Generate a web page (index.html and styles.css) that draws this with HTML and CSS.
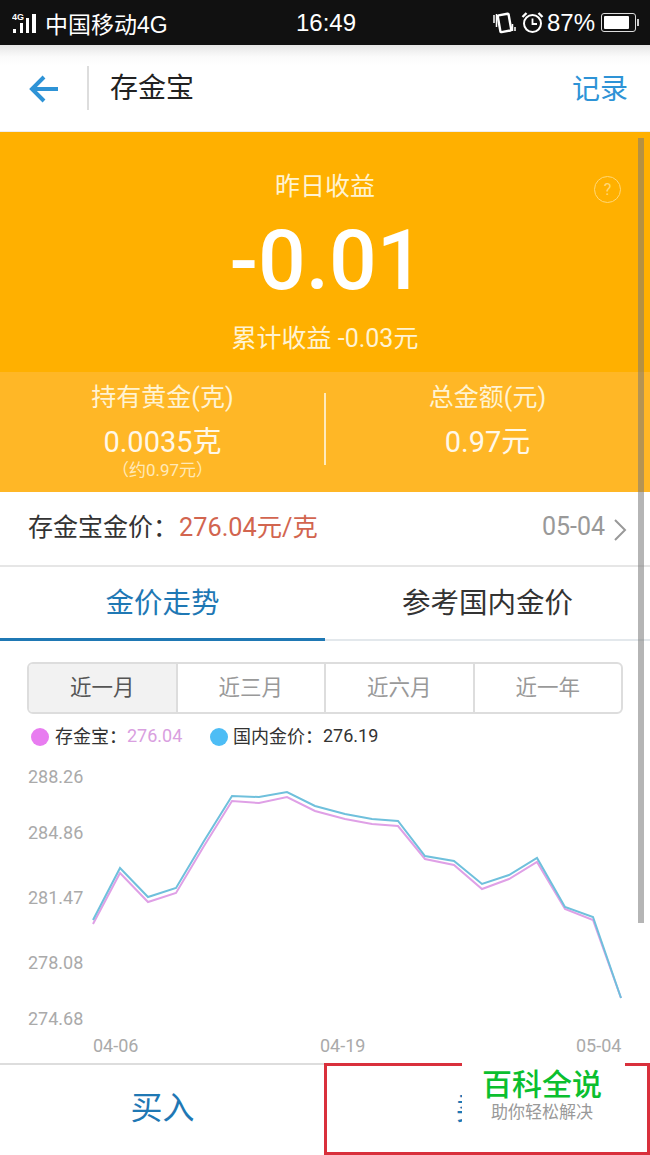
FILE: index.html
```html
<!DOCTYPE html>
<html lang="zh-CN">

<head>
    <meta charset="UTF-8">
    <title>存金宝</title>
    <link rel="stylesheet" href="styles.css">
</head>

<body>
    <div class="page">
        <!-- 状态栏 -->
        <div class="status">
            <svg class="sig" width="26" height="26" viewBox="0 0 26 26">
                <text x="0" y="10" class="sig-txt">4G</text>
                <rect x="1" y="19" width="3" height="4" />
                <rect x="8" y="13" width="3" height="10" />
                <rect x="14" y="8" width="3" height="15" />
                <rect x="20" y="4" width="4" height="19" />
            </svg>
            <span class="carrier">中国移动4G</span>
            <span class="time">16:49</span>
            <div class="status-right">
                <svg width="24" height="24" viewBox="0 0 24 24" fill="none" stroke="#fff">
                    <rect x="7" y="3.5" width="11" height="17" rx="1" stroke-width="2.4" transform="rotate(-10 12 12)" />
                    <path d="M2 4v8M4.5 3v13M20.500 13v7M23 16v4" stroke-width="1.5" />
                </svg>
                <svg class="clock" width="23" height="23" viewBox="0 0 23 23" fill="none" stroke="#fff">
                    <circle cx="11.500" cy="12.500" r="8.500" stroke-width="2" />
                    <path d="M11.500 7.500v5.500h4.500" stroke-width="1.800" />
                    <path d="M1.500 6l4-4M21.500 6l-4-4" stroke-width="2.400" />
                </svg>
                <span class="pct">87%</span>
                <div class="batt"><div class="batt-in"></div></div>
            </div>
        </div>

        <!-- 标题栏 -->
        <div class="header">
            <svg class="back" width="30" height="30" viewBox="0 0 30 30" fill="none" stroke="#2e93d6" stroke-width="4">
                <path d="M29 15H4M15 3L3 15l12 12" />
            </svg>
            <span class="title">存金宝</span>
            <span class="record">记录</span>
        </div>

        <!-- 收益 -->
        <div class="hero">
            <div class="hero-label">昨日收益</div>
            <div class="hero-num">-0.01</div>
            <div class="hero-sum">累计收益 -0.03元</div>
            <span class="help">?</span>
        </div>
        <div class="stats">
            <div class="stat stat-left">
                <div class="stat-label">持有黄金(克)</div>
                <div class="stat-num">0.0035克</div>
                <div class="stat-sub">（约0.97元）</div>
            </div>
            <div class="stat">
                <div class="stat-label">总金额(元)</div>
                <div class="stat-num">0.97元</div>
            </div>
        </div>

        <div class="price">
            <span class="price-name">存金宝金价：</span>
            <span class="price-val">276.04元/克</span>
            <span class="price-date">05-04</span>
            <svg class="price-more" width="14" height="24" viewBox="0 0 14 24" fill="none" stroke="#999" stroke-width="2">
                <path d="M2 2l10 10L2 22" />
            </svg>
        </div>

        <div class="tabs">
            <div class="tab on">金价走势</div>
            <div class="tab">参考国内金价</div>
        </div>

        <div class="range">
            <div class="range-item on">近一月</div>
            <div class="range-item">近三月</div>
            <div class="range-item">近六月</div>
            <div class="range-item">近一年</div>
        </div>

        <div class="legend">
            <i class="dot dot-pink"></i>
            <span class="legend-name">存金宝：</span>
            <span class="legend-pink">276.04</span>
            <i class="dot dot-blue"></i>
            <span class="legend-name">国内金价：</span>
            <span>276.19</span>
        </div>

        <!-- 走势图 -->
        <svg class="chart" width="650" height="303" viewBox="0 760 650 303">
            <g class="axis">
                <text x="28" y="783">288.26</text>
                <text x="28" y="839">284.86</text>
                <text x="28" y="904">281.47</text>
                <text x="28" y="969">278.08</text>
                <text x="28" y="1025">274.68</text>
                <text x="93" y="1052">04-06</text>
                <text x="320" y="1052">04-19</text>
                <text x="576" y="1052">05-04</text>
            </g>
            <polyline class="line-pink" points="93,924 120,873 148,902 176,893 204,846 232,801 259,803 287,797 315,811 345,819 372,824 398,826 425,859 454,865 482,889 509,879 537,862 565,909 593,920 621,998" />
            <polyline class="line-blue" points="93,920 120,868 148,897 176,888 204,841 232,796 259,797 287,792 315,806 345,814 372,819 398,821 425,856 454,861 482,884 509,875 537,858 565,907 593,917 621,998" />
        </svg>

        <div class="bottom">
            <div class="bottom-btn">买入</div>
            <div class="bottom-btn">卖出</div>
        </div>

        <div class="scrollbar"></div>
        <div class="redbox"></div>
        <div class="mark">
            <div class="mark-name">百科全说</div>
            <div class="mark-sub">助你轻松解决</div>
        </div>
    </div>
</body>

</html>
```

FILE: styles.css
```css
* {
    padding: 0;
    margin: 0;
    box-sizing: border-box;
}

body {
    background: #fff;
    font-family: "Roboto", "Noto Sans CJK SC", sans-serif;
}

.page {
    position: relative;
    width: 650px;
    height: 1155px;
    overflow: hidden;
}

/* 状态栏 */
.status {
    display: flex;
    align-items: center;
    height: 45px;
    padding-left: 12px;
    background: #111;
    color: #fff;
    font-family: "Liberation Sans", "Noto Sans CJK SC", sans-serif;
}

.sig {
    fill: #fff;
    margin-right: 7px;
}

.sig-txt {
    font-family: "Liberation Sans", sans-serif;
    font-size: 9px;
    font-weight: 700;
}

.carrier {
    width: 251px;
    font-size: 23px;
}

.time {
    width: 60px;
    font-size: 24px;
}

.status-right {
    display: flex;
    align-items: center;
    margin-left: 136px;
}

.clock {
    margin-left: 5px;
}

.pct {
    margin-left: 3px;
    font-size: 24px;
}

.batt {
    position: relative;
    width: 35px;
    height: 19px;
    margin-left: 6px;
    padding: 2px;
    border: 1px solid #ddd;
    border-radius: 3px;
}

.batt::after {
    content: "";
    position: absolute;
    right: -4px;
    top: 5px;
    width: 2px;
    height: 7px;
    background: #ccc;
}

.batt-in {
    width: 87%;
    height: 100%;
    background: #fff;
    border-radius: 1px;
}

/* 标题栏 */
.header {
    display: flex;
    align-items: center;
    height: 87px;
    padding: 0 22px 0 29px;
    background: linear-gradient(#e6e6e6, #fbfbfb 12px, #fff 20px);
    border-bottom: 1px solid #eee;
}

.back {
    margin-top: 1px;
}

.title {
    flex: 1;
    margin-left: 28px;
    padding: 2px 0 0 23px;
    font-size: 28px;
    line-height: 44px;
    color: #222;
    background: linear-gradient(#ddd, #ddd) left center / 2px 44px no-repeat;
}

.record {
    margin-top: -3px;
    font-size: 28px;
    color: #2e93d6;
}

/* 收益 */
.hero {
    position: relative;
    height: 240px;
    padding-top: 37px;
    background: #ffb000;
    color: #fff;
    text-align: center;
}

.hero-label {
    font-size: 25px;
    line-height: 36px;
    color: #fff3d2;
}

.hero-num {
    margin-top: 8px;
    padding-left: 4px;
    font-size: 84px;
    font-weight: 500;
    line-height: 96px;
}

.hero-sum {
    margin-top: 12px;
    font-size: 25px;
    line-height: 36px;
    color: #fff3d2;
}

.help {
    position: absolute;
    right: 29px;
    top: 44px;
    width: 27px;
    height: 27px;
    border: 1px solid #ffd877;
    border-radius: 50%;
    font-size: 16px;
    line-height: 25px;
    color: #ffd877;
}

.stats {
    display: flex;
    height: 120px;
    background: #ffb726;
    color: #fff3d2;
    text-align: center;
}

.stat {
    flex: 1;
    height: 120px;
    padding-top: 8px;
}

.stat-left {
    position: relative;
}

.stat-left::after {
    content: "";
    position: absolute;
    right: -1px;
    top: 21px;
    width: 2px;
    height: 72px;
    background: #ffeabb;
}

.stat-label {
    font-size: 25px;
    line-height: 36px;
}

.stat-num {
    margin-top: 6px;
    font-size: 29px;
    line-height: 40px;
    color: #fff8e8;
}

.stat-sub {
    margin-top: -2px;
    font-size: 17px;
    line-height: 20px;
    color: #ffe9b8;
}

/* 金价 */
.price {
    display: flex;
    align-items: center;
    height: 75px;
    padding: 0 23px 7px 28px;
    border-bottom: 2px solid #e6e6e6;
    font-size: 25px;
}

.price-name {
    color: #333;
}

.price-val {
    flex: 1;
    margin-left: 1px;
    font-size: 25.300px;
    color: #d2654f;
}

.price-date {
    margin: 2px 8px 0 0;
    color: #999;
}

.price-more {
    margin-top: 10px;
}

.tabs {
    display: flex;
    height: 74px;
    border-bottom: 2px solid #e3e8ec;
}

.tab {
    flex: 1;
    height: 74px;
    font-size: 28.500px;
    line-height: 74px;
    text-align: center;
    color: #333;
}

.tab.on {
    color: #1f78b4;
    border-bottom: 3px solid #1f78b4;
}

/* 时间范围 */
.range {
    display: flex;
    height: 52px;
    margin: 21px 27px 0;
    border: 2px solid #ddd;
    border-radius: 6px;
    overflow: hidden;
}

.range-item {
    flex: 1;
    font-size: 21.500px;
    line-height: 47px;
    text-align: center;
    color: #999;
    border-left: 2px solid #ddd;
}

.range-item.on {
    border-left: 0;
    background: #f2f2f2;
    color: #555;
}

.legend {
    display: flex;
    align-items: center;
    height: 46px;
    padding: 0 0 4px 31px;
    font-size: 18px;
    color: #333;
}

.legend-name {
    margin-left: 6px;
}

.legend-pink {
    width: 83px;
    color: #d9a0e0;
}

.dot {
    width: 18px;
    height: 18px;
    margin-top: 3px;
    border-radius: 50%;
}

.dot-pink {
    background: #e87cf0;
}

.dot-blue {
    margin-right: -1px;
    background: #4dbdf5;
}

.chart {
    display: block;
    height: 303px;
}

.axis text {
    font-size: 18px;
    fill: #aaa;
}

.line-pink,
.line-blue {
    fill: none;
    stroke-width: 2;
}

.line-pink {
    stroke: #dfa0e6;
}

.line-blue {
    stroke: #6fc0dc;
}

/* 底部按钮 */
.bottom {
    display: flex;
    height: 92px;
    border-top: 2px solid #ddd;
}

.bottom-btn {
    flex: 1;
    font-size: 32px;
    line-height: 86px;
    text-align: center;
    color: #1f78b4;
}

.scrollbar {
    position: absolute;
    left: 638px;
    top: 138px;
    width: 6px;
    height: 785px;
    background: rgba(120, 120, 120, .55);
}

.redbox {
    position: absolute;
    left: 324px;
    top: 1063px;
    width: 326px;
    height: 92px;
    border: 3px solid #d9303c;
}

.mark {
    position: absolute;
    left: 462px;
    top: 1053px;
    width: 163px;
    height: 77px;
    padding: 15px 3px 0 0;
    background: #fff;
    text-align: center;
}

.mark-name {
    font-size: 30px;
    font-weight: 500;
    line-height: 34px;
    color: #0bbf2f;
}

.mark-sub {
    margin-top: -1px;
    font-size: 17px;
    line-height: 22px;
    color: #999;
}
```
